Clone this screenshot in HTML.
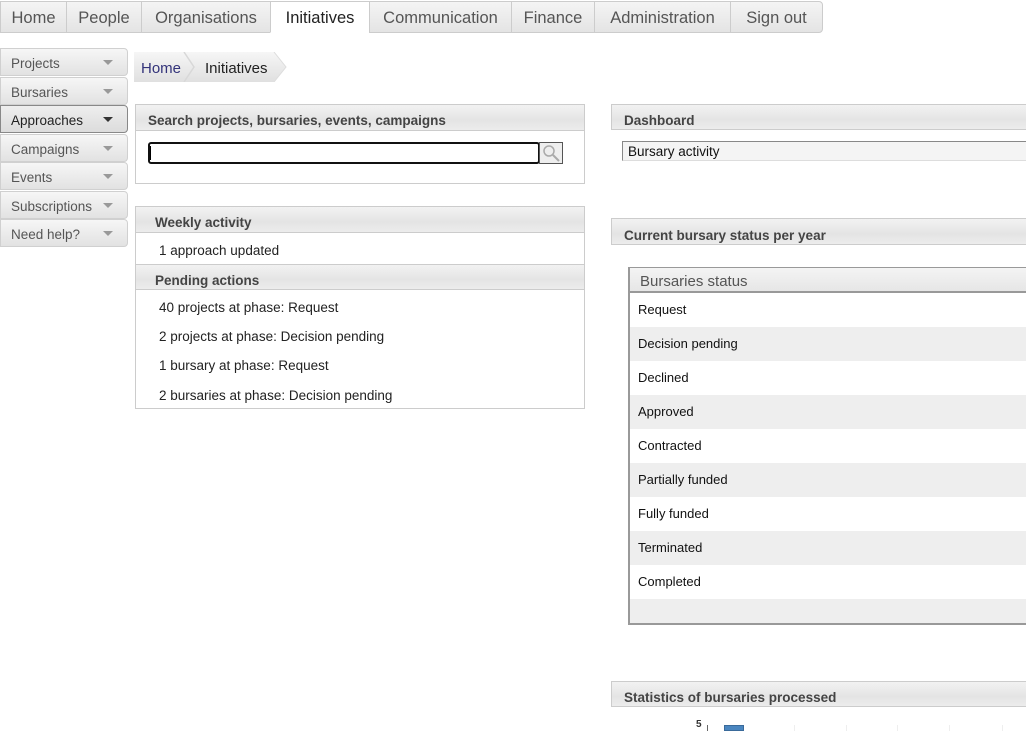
<!DOCTYPE html>
<html><head><style>
*{box-sizing:border-box;margin:0;padding:0}
body{width:1026px;height:731px;overflow:hidden;background:#fff;font-family:"Liberation Sans",sans-serif;color:#222;position:relative}
.a{position:absolute}
.nav{top:1px;height:32px;border:1px solid #ccc;background:linear-gradient(#f4f4f4,#e4e4e4);font-size:16.5px;color:#555;line-height:33px;text-align:center}
.nav.act{background:#fff;color:#222;border-bottom-color:#fff}
.side{left:0;width:128px;height:28px;border:1px solid #d0d0d0;border-radius:0 4px 4px 0;background:linear-gradient(#f6f6f6,#e2e2e2);font-size:13.5px;color:#555;line-height:29px;padding-left:10px}
.side.act{border-color:#888;color:#222;background:linear-gradient(#eee,#dcdcdc)}
.side:after{content:"";position:absolute;right:14px;top:11px;border:5px solid transparent;border-top:5px solid #999;border-bottom:0}
.side.act:after{border-top-color:#333}
.panel{border:1px solid #ccc}
.hd{height:26px;background:linear-gradient(#f2f2f2,#e4e4e4 60%,#ececec);border-bottom:1px solid #ccc;font-weight:bold;font-size:13.5px;color:#444;line-height:32px;padding-left:12px}
.t{font-size:13.5px;color:#222}
.row{position:absolute;left:0;right:0;height:34px;font-size:13px;line-height:34px;padding-left:8px;color:#111}
</style></head><body>
<div class="a nav" style="left:0;width:67px">Home</div>
<div class="a nav" style="left:66px;width:76px">People</div>
<div class="a nav" style="left:141px;width:130px">Organisations</div>
<div class="a nav act" style="left:270px;width:100px">Initiatives</div>
<div class="a nav" style="left:369px;width:143px">Communication</div>
<div class="a nav" style="left:511px;width:84px">Finance</div>
<div class="a nav" style="left:594px;width:137px">Administration</div>
<div class="a nav" style="left:730px;width:93px;border-radius:0 4px 4px 0">Sign out</div>

<div class="a side" style="top:48px">Projects</div>
<div class="a side" style="top:77px">Bursaries</div>
<div class="a side act" style="top:105px">Approaches</div>
<div class="a side" style="top:134px">Campaigns</div>
<div class="a side" style="top:162px">Events</div>
<div class="a side" style="top:191px">Subscriptions</div>
<div class="a side" style="top:219px">Need help?</div>

<svg class="a" style="left:134px;top:52px" width="154" height="30"><defs><linearGradient id="g" x1="0" y1="0" x2="0" y2="1"><stop offset="0" stop-color="#f6f6f6"/><stop offset="1" stop-color="#e0e0e0"/></linearGradient></defs>
<path d="M0 0H140L152 15L140 30H0Z" fill="url(#g)"/><path d="M50 0L60 15L50 30" fill="none" stroke="#d8d8d8" stroke-width="1.5"/><path d="M140 0L152 15L140 30" fill="none" stroke="#ddd"/>
<text x="7" y="21" font-family="Liberation Sans" font-size="15" fill="#33337a">Home</text><text x="71" y="21" font-family="Liberation Sans" font-size="15" fill="#222">Initiatives</text></svg>

<div class="a panel" style="left:135px;top:104px;width:450px;height:80px"><div class="hd">Search projects, bursaries, events, campaigns</div></div>
<div class="a" style="left:148px;top:142px;width:392px;height:22px;border:2px solid #111;border-radius:3px;background:#fff"></div>
<div class="a" style="left:150px;top:146px;width:1px;height:14px;background:#000"></div>
<div class="a" style="left:539px;top:142px;width:24px;height:22px;border:1px solid #555;background:#eee"><svg width="22" height="20"><circle cx="9" cy="8" r="5" fill="none" stroke="#aaa" stroke-width="1.5"/><path d="M13 12L19 18" stroke="#aaa" stroke-width="2"/></svg></div>

<div class="a panel" style="left:135px;top:206px;width:450px;height:203px">
<div class="hd" style="padding-left:19px">Weekly activity</div>
<div class="a t" style="left:23px;top:36px">1 approach updated</div>
<div class="hd a" style="left:0;right:0;top:57px;border-top:1px solid #ccc;padding-left:19px">Pending actions</div>
<div class="a t" style="left:23px;top:93px">40 projects at phase: Request</div>
<div class="a t" style="left:23px;top:122px">2 projects at phase: Decision pending</div>
<div class="a t" style="left:23px;top:151px">1 bursary at phase: Request</div>
<div class="a t" style="left:23px;top:181px">2 bursaries at phase: Decision pending</div>
</div>

<div class="a panel" style="left:611px;top:104px;width:420px;height:26px;border-right:0"><div class="hd" style="border-bottom:0;height:24px;line-height:31px">Dashboard</div></div>
<div class="a" style="left:622px;top:141px;width:410px;height:20px;border:1px solid #888;border-right:0;border-bottom-color:#ddd;background:#f4f4f4;font-size:13.5px;line-height:19px;padding-left:5px;color:#111">Bursary activity</div>

<div class="a panel" style="left:611px;top:218px;width:420px;height:27px;border-right:0"><div class="hd" style="border-bottom:0;height:25px;line-height:34px">Current bursary status per year</div></div>

<div class="a" style="left:628px;top:267px;width:400px;height:358px;border:2px solid #999;border-right:0;border-top-width:1px;overflow:hidden">
<div style="height:25px;background:linear-gradient(#f4f4f4,#e6e6e6);border-bottom:2px solid #999;font-size:15px;color:#555;line-height:27px;padding-left:10px">Bursaries status</div>
<div class="row" style="top:25px">Request</div>
<div class="row" style="top:59px;background:#eee">Decision pending</div>
<div class="row" style="top:93px">Declined</div>
<div class="row" style="top:127px;background:#eee">Approved</div>
<div class="row" style="top:161px">Contracted</div>
<div class="row" style="top:195px;background:#eee">Partially funded</div>
<div class="row" style="top:229px">Fully funded</div>
<div class="row" style="top:263px;background:#eee">Terminated</div>
<div class="row" style="top:297px">Completed</div>
<div class="row" style="top:331px;background:#eee;height:24px"></div>
</div>

<div class="a panel" style="left:611px;top:681px;width:420px;height:26px;border-right:0"><div class="hd" style="border-bottom:0;height:24px;line-height:31px">Statistics of bursaries processed</div></div>
<div class="a" style="left:696px;top:719px;font-size:10px;font-weight:bold;color:#333">5</div>
<div class="a" style="left:707px;top:725px;width:1px;height:6px;background:#666"></div>
<div class="a" style="left:724px;top:725px;width:20px;height:6px;background:#4a86c0;border:1px solid #3a6a9a"></div>
<div class="a" style="left:794px;top:725px;width:1px;height:6px;background:#eee"></div>
<div class="a" style="left:846px;top:725px;width:1px;height:6px;background:#eee"></div>
<div class="a" style="left:897px;top:725px;width:1px;height:6px;background:#eee"></div>
<div class="a" style="left:949px;top:725px;width:1px;height:6px;background:#eee"></div>
<div class="a" style="left:1002px;top:725px;width:1px;height:6px;background:#eee"></div>
</body></html>
